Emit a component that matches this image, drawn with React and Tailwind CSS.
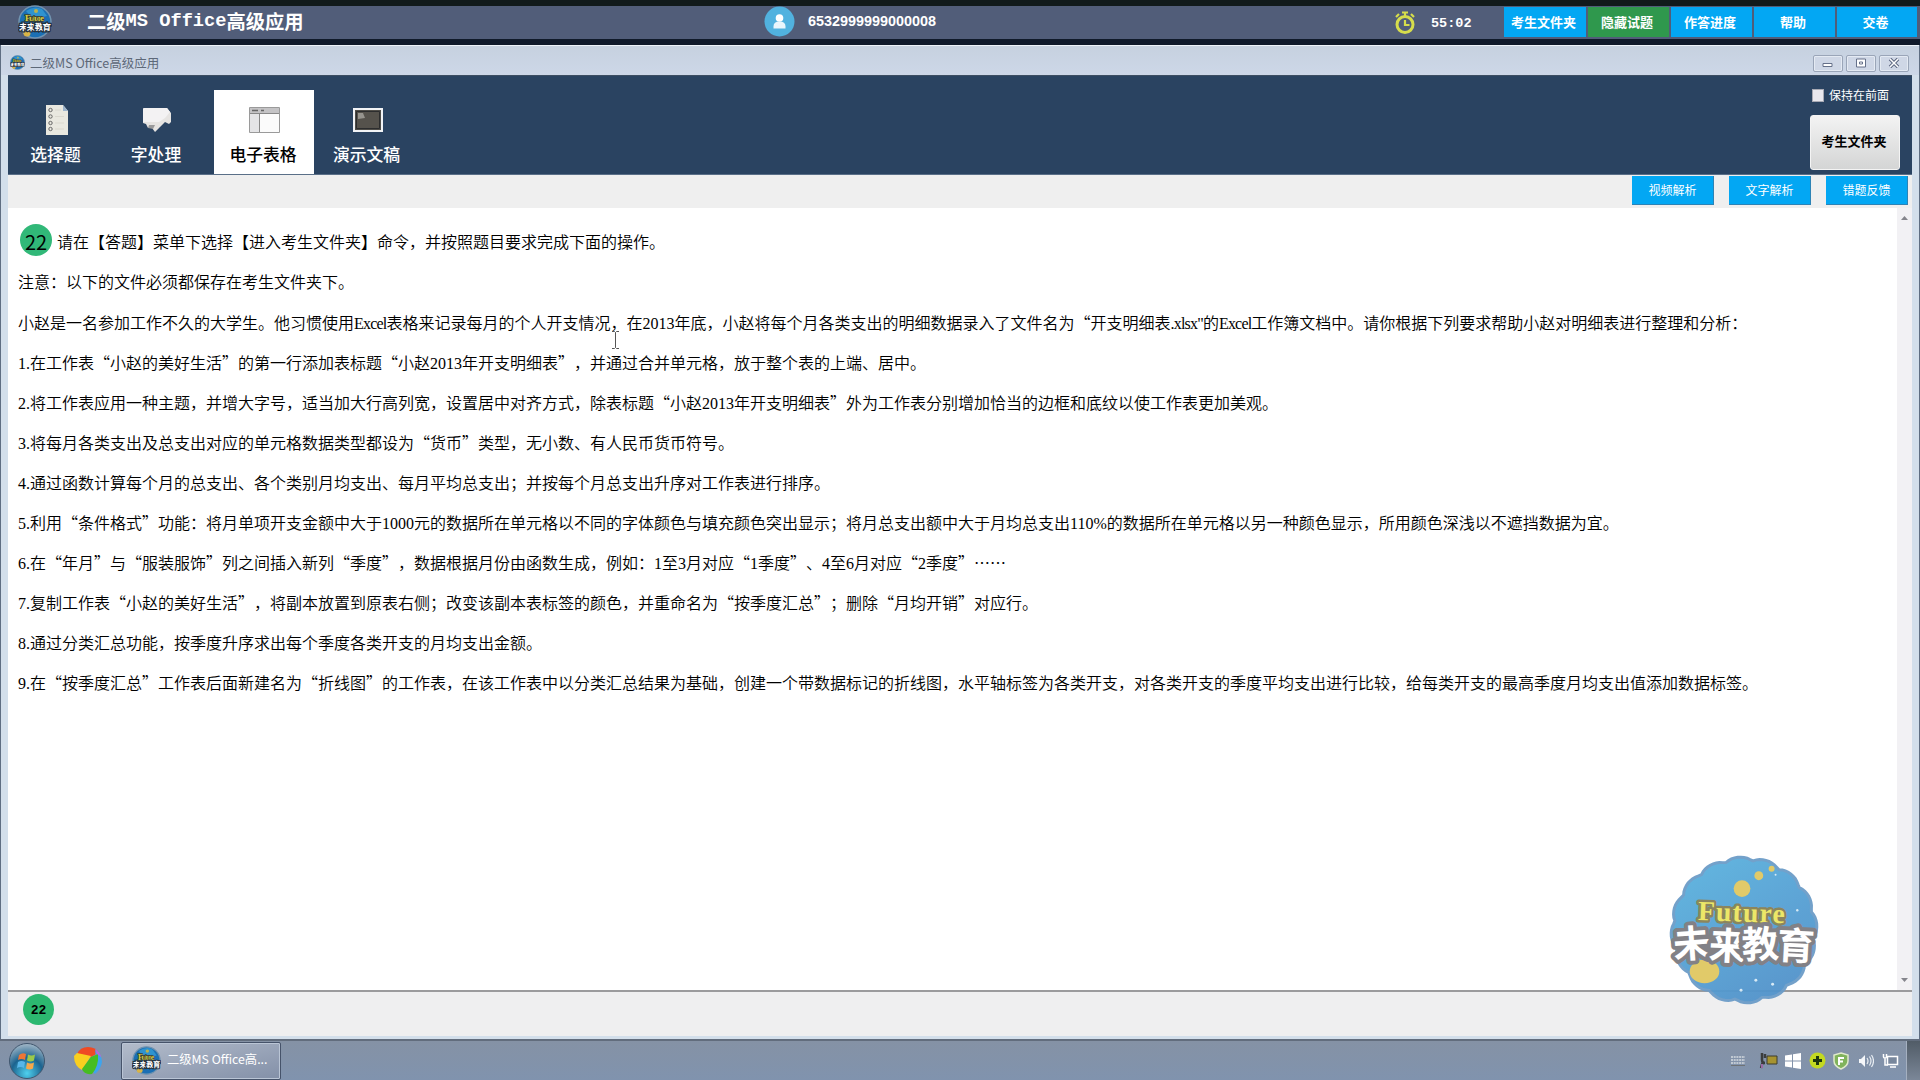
import React from "react";

const CJK = "font-['Noto_Sans_CJK_SC',sans-serif] [text-spacing-trim:space-all]";
const LINES = [
  "注意：以下的文件必须都保存在考生文件夹下。",
  "小赵是一名参加工作不久的大学生。他习惯使用Excel表格来记录每月的个人开支情况，在2013年底，小赵将每个月各类支出的明细数据录入了文件名为“开支明细表.xlsx\"的Excel工作簿文档中。请你根据下列要求帮助小赵对明细表进行整理和分析：",
  "1.在工作表“小赵的美好生活”的第一行添加表标题“小赵2013年开支明细表”，并通过合并单元格，放于整个表的上端、居中。",
  "2.将工作表应用一种主题，并增大字号，适当加大行高列宽，设置居中对齐方式，除表标题“小赵2013年开支明细表”外为工作表分别增加恰当的边框和底纹以使工作表更加美观。",
  "3.将每月各类支出及总支出对应的单元格数据类型都设为“货币”类型，无小数、有人民币货币符号。",
  "4.通过函数计算每个月的总支出、各个类别月均支出、每月平均总支出；并按每个月总支出升序对工作表进行排序。",
  "5.利用“条件格式”功能：将月单项开支金额中大于1000元的数据所在单元格以不同的字体颜色与填充颜色突出显示；将月总支出额中大于月均总支出110%的数据所在单元格以另一种颜色显示，所用颜色深浅以不遮挡数据为宜。",
  "6.在“年月”与“服装服饰”列之间插入新列“季度”，数据根据月份由函数生成，例如：1至3月对应“1季度”、4至6月对应“2季度”……",
  "7.复制工作表“小赵的美好生活”，将副本放置到原表右侧；改变该副本表标签的颜色，并重命名为“按季度汇总”；删除“月均开销”对应行。",
  "8.通过分类汇总功能，按季度升序求出每个季度各类开支的月均支出金额。",
  "9.在“按季度汇总”工作表后面新建名为“折线图”的工作表，在该工作表中以分类汇总结果为基础，创建一个带数据标记的折线图，水平轴标签为各类开支，对各类开支的季度平均支出进行比较，给每类开支的最高季度月均支出值添加数据标签。",
];

// Latin runs use the serif face; everything else, curly quotes included, the Chinese one.
function Mixed({ text }) {
  return text.split(/([\x20-\x7e]+)/).map((part, i) =>
    i % 2 ? (
      <span key={i} className={"font-['Liberation_Serif',serif] font-normal " + (/[a-z]/.test(part) ? "tracking-[-0.8px]" : "")}>{part}</span>
    ) : part
  );
}

function Logo({ size }) {
  const outline = Array.from({ length: 144 }, (_, i) => {
    const a = (i * Math.PI) / 72;
    const r = 70 + 4 * Math.abs(Math.cos(a * 8 + 0.6)) ** 0.7;
    return (75 + r * Math.cos(a)).toFixed(1) + "," + (75 + r * Math.sin(a)).toFixed(1);
  }).join(" ");
  return (
    <svg width={size} height={size} viewBox="0 0 150 150" className="shrink-0 overflow-visible">
      <defs>
        <linearGradient id="sea" x1="0" y1="0" x2="0.6" y2="1">
          <stop offset="0" stopColor="#5bb4e0" />
          <stop offset="1" stopColor="#5293cb" />
        </linearGradient>
      </defs>
      <polygon points={outline} fill="url(#sea)" stroke="#6c9cc8" strokeWidth="3" />
      <g fill="#e0c861">
        <circle cx="73" cy="33" r="8.5" />
        <circle cx="90" cy="20" r="4.5" />
        <circle cx="103" cy="13" r="3" />
        <ellipse cx="35" cy="117" rx="15" ry="12" />
      </g>
      <g fill="#d5e9f5">
        <circle cx="107" cy="19" r="1" /><circle cx="119" cy="92" r="1.5" /><circle cx="87" cy="126" r="1.5" />
        <circle cx="72" cy="136" r="1.5" /><circle cx="104" cy="130" r="1.5" /><circle cx="129" cy="55" r="1.2" />
      </g>
      <g fontFamily="'Liberation Serif', serif" fontWeight="700" fontSize="28" fill="#ece660" stroke="#857f55" strokeWidth="5" paintOrder="stroke" strokeLinejoin="round">
        <text x="28" y="65" textLength="88" transform="rotate(2 28 65)">Future</text>
      </g>
      <g fontFamily="'Noto Sans CJK SC', sans-serif" fontWeight="700" fontSize="38" fill="#fff" stroke="#7c7b80" strokeWidth="8" paintOrder="stroke" strokeLinejoin="round">
        <text x="4" y="104" textLength="142" rotate="-4 3 -2 3">未来教育</text>
      </g>
    </svg>
  );
}

// Globe version of the logo for the title bars and the task button
function MiniLogo({ size }) {
  return (
    <svg width={size} height={size} viewBox="0 0 34 34" className="shrink-0">
      <circle cx="17" cy="17" r="16" fill="#1b6fb4" stroke="#7194b0" strokeWidth="1.5" />
      <path d="M8 6q8-6 16-2l5 7-14 3z" fill="#2f93cf" />
      <circle cx="18" cy="6" r="2" fill="#b9b24f" />
      <circle cx="9" cy="28" r="3.500" fill="#d9b447" />
      <text x="7" y="16" textLength="19" fontFamily="'Liberation Serif', serif" fontWeight="700" fontSize="9" fill="#d9cf45" stroke="#3b4230" strokeWidth="1.500" paintOrder="stroke">Future</text>
      <text x="1" y="25" textLength="32" fontFamily="'Noto Sans CJK SC', sans-serif" fontWeight="700" fontSize="8.500" fill="#fff" stroke="#26323f" strokeWidth="2.500" paintOrder="stroke">未来教育</text>
    </svg>
  );
}

// Icons shown above the four section labels
function SheetIcon() {
  return (
    <svg width="24" height="32" viewBox="0 0 24 32">
      <path d="M1 1h17l5 6v24H1z" fill="#e9e8e0" />
      <path d="M18 1v6h5z" fill="#9db4cc" />
      <g fill="none" stroke="#666" strokeWidth="1">
        <circle cx="5.5" cy="6" r="1.7" /><circle cx="5.5" cy="12.5" r="1.7" /><circle cx="5.5" cy="19" r="1.7" /><circle cx="5.5" cy="25" r="1.7" />
      </g>
      <path d="M10 6h6M10 12.500h9M10 19h9M10 25h9" stroke="#dad8cf" />
    </svg>
  );
}
function BubbleIcon() {
  return (
    <svg width="30" height="26" viewBox="0 0 30 26">
      <path d="M1 2Q1 1 3 1h22l4 5v9l-2 2-4-2-5 5-5 5-3-4H6l-2-4-3-1z" fill="#e6e4e2" />
      <path d="M1 2Q1 1 3 1h22l3 4-5 6-6 4H1z" fill="#f3f2f3" />
      <path d="M7 18h6l-2 4-5-1z" fill="#9a9a9b" />
    </svg>
  );
}
function TableIcon() {
  return (
    <svg width="31" height="26" viewBox="0 0 31 26">
      <path d="M.5.500h30v25H.5z" fill="#fbfbfb" stroke="#9a9a9a" />
      <path d="M1 1h29v5H1z" fill="#c4c3c5" />
      <path d="M1 7h9v18H1z" fill="#e4e4e6" />
      <path d="M10.500 6v19M1 6.500h29" stroke="#888" />
      <path d="M3 3.500h6M12 3.500h3" stroke="#666" strokeWidth="1.500" />
    </svg>
  );
}
function ScreenIcon() {
  return (
    <svg width="30" height="24" viewBox="0 0 30 24">
      <path d="M1 1h28v22H1z" fill="#4f4d48" stroke="#f1f3f6" strokeWidth="2" />
      <path d="M3.500 3.500h23v17h-23z" fill="#55524c" stroke="#2c2d2e" />
      <path d="M5 5h5l2 5-7 1z" fill="#96948e" />
    </svg>
  );
}

const TABS = [
  { label: "选择题", Icon: SheetIcon, cls: "w-[97px] mr-px text-white" },
  { label: "字处理", Icon: BubbleIcon, cls: "w-[102px] mr-[6px] text-white" },
  { label: "电子表格", Icon: TableIcon, cls: "w-[100px] bg-white text-black" },
  { label: "演示文稿", Icon: ScreenIcon, cls: "w-[107px] text-white" },
];

const TOP_BUTTONS = [
  { label: "考生文件夹", cls: "w-[82px] bg-[#03a7f3]" },
  { label: "隐藏试题", cls: "w-[81px] bg-[#2f984d]" },
  { label: "作答进度", cls: "w-[81px] bg-[#03a7f3]" },
  { label: "帮助", cls: "w-[81px] bg-[#03a7f3]" },
  { label: "交卷", cls: "w-[80px] bg-[#03a7f3]" },
];

function TopBar() {
  return (
    <header className="flex h-[45px] shrink-0 items-center border-b-[6px] border-t-[6px] border-b-[#101a2a] border-t-[#111a1b] bg-[#515d79] text-white">
      <div className="ml-[17px] mt-[-1px] flex h-[34px] w-[36px] items-center justify-center"><MiniLogo size={34} /></div>
      <div className="ml-[34px] mt-[-3px] flex h-[30px] w-[645px] items-center whitespace-pre text-[19.3px] font-bold leading-[30px]">
        二级<span className="font-['Liberation_Mono',monospace] text-[18.700px] font-bold">MS Office</span>高级应用
      </div>
      <svg width="31" height="31" viewBox="0 0 31 31" className="mt-[-2px] ml-[32px]">
        <circle cx="15.500" cy="15.500" r="15" fill="#51b2df" />
        <circle cx="15.500" cy="12" r="3.800" fill="#fff" />
        <path d="M9.500 22.500v-2q0-5 6-5t6 5v2z" fill="#eaf6fc" />
      </svg>
      <div className="mt-[-2px] ml-[13px] w-[571px] font-['Liberation_Sans',sans-serif] text-[14.400px] font-bold leading-none">6532999999000008</div>
      <svg width="22" height="24" viewBox="0 0 22 24" className="ml-[15px]">
        <circle cx="11" cy="13.500" r="8" fill="none" stroke="#d6dd4c" strokeWidth="3" />
        <path d="M11 9v5h4.500M8 1.500h6M11 1v4M2 6l3-3M20 6l-3-3" fill="none" stroke="#d6dd4c" strokeWidth="2.200" />
      </svg>
      <div className="ml-[15px] mt-[2px] w-[73px] font-['Liberation_Mono',monospace] text-[13.500px] font-bold leading-none">55:02</div>
      <div className="mt-[-1px] flex gap-[2px]">
        {TOP_BUTTONS.map((b) => (
          <button key={b.label} className={"flex h-[30px] items-center justify-center pr-[3px] text-[13px] font-bold " + b.cls}>{b.label}</button>
        ))}
      </div>
    </header>
  );
}

function TitleBar() {
  const box = "flex h-[17px] w-[30px] items-center justify-center rounded-[2px] border border-[#9aa5b8] bg-[#cfd7e6] shadow-[inset_0_0_0_1px_#e4eaf3]";
  return (
    <div className="flex h-[30px] shrink-0 items-center border-t border-[#eef3f8] bg-linear-to-b from-[#c6d1df] to-[#cdd7e8] pl-[9px] pr-[10px]">
      <div className="mt-[3px] flex items-center"><MiniLogo size={15} /></div>
      <div className="ml-[5px] mt-[5px] text-[12.500px] leading-none text-[#5d6878]">二级MS Office高级应用</div>
      <div className="ml-auto mt-[5px] flex gap-[3px]">
        <div className={box}><svg width="12" height="10" viewBox="0 0 12 10"><path d="M1 5.500h9v3H1z" fill="#fff" stroke="#66718a" /></svg></div>
        <div className={box}><svg width="12" height="10" viewBox="0 0 12 10"><path d="M1.500 1h9v8h-9z" fill="#fff" stroke="#66718a" /><path d="M4.500 4h3v2h-3z" fill="none" stroke="#66718a" /></svg></div>
        <div className={box}><svg width="12" height="10" viewBox="0 0 12 10"><path d="M2 1l8 8M10 1L2 9" stroke="#5c6781" strokeWidth="3.500" /><path d="M2 1l8 8M10 1L2 9" stroke="#fff" strokeWidth="1.500" /></svg></div>
      </div>
    </div>
  );
}

function Ribbon() {
  return (
    <div className="flex h-[100px] shrink-0 items-end border-b border-t border-b-[#5a6f88] border-t-[#3d4e63] bg-[#2a4361]">
      {TABS.map(({ label, Icon, cls }) => (
        <div key={label} className={"flex h-[84px] flex-col items-center " + cls}>
          <div className="mt-[13px] flex h-[34px] items-center justify-center"><Icon /></div>
          <div className="mr-[2px] mt-[7px] whitespace-nowrap text-[16.800px] font-medium leading-[20px]">{label}</div>
        </div>
      ))}
      <div className="ml-auto mr-[12px] flex w-[90px] flex-col self-start">
        <label className="mt-[12px] flex h-[15px] items-center text-[12px] leading-none text-white">
          <span className="ml-[2px] mr-[5px] h-[13px] w-[12px] border border-[#a8aab4] bg-[#e9e8ee]" />
          <span className="mt-[-2px]">保持在前面</span>
        </label>
        <button className="mt-[12px] h-[55px] rounded-[3px] border border-[#f4f4f4] bg-linear-to-b from-[#f3f3f3] to-[#d4d5d5] pb-[3px] pr-[2px] text-[13px] font-bold text-black">考生文件夹</button>
      </div>
    </div>
  );
}

function Taskbar() {
  return (
    <footer className="flex h-[41px] shrink-0 items-center border-t-2 border-[#626d7d] bg-linear-to-b from-[#8592a5] to-[#8093ae]">
      <svg width="38" height="38" viewBox="0 0 38 38" className="ml-[8px]">
        <defs><radialGradient id="orb" cx=".5" cy=".85" r=".9"><stop offset="0" stopColor="#4fd0ee" /><stop offset=".5" stopColor="#1b638f" /><stop offset="1" stopColor="#b6c3cf" /></radialGradient></defs>
        <circle cx="19" cy="19" r="17.500" fill="url(#orb)" stroke="#40566e" />
        <path d="M11 13q3.500-3 7-1l-1 6q-3.500-2-7 0z" fill="#ee7635" /><path d="M20 12.500q3.500 2 7 0l-1 6q-3.500 2-7 0z" fill="#9bc94a" />
        <path d="M10 20q3.500-2 7 0l-1 6q-3.500-2-7 0z" fill="#58b6e8" /><path d="M19 20.500q3.500 2 7 0l-1 6q-3.500 2-7 0z" fill="#f6a84a" />
      </svg>
      <svg width="30" height="30" viewBox="0 0 30 30" className="ml-[27px]">
        <path d="M4 8Q7 1 15 1t10 6l-9 5z" fill="#ef4a24" /><path d="M22 4q7 4 7 12-1 7-7 12l-4-5 5-12z" fill="#3ea4ed" />
        <path d="M1 10l3-3 14 3-9 14Q1 20 1 10z" fill="#f9cf1f" /><path d="M9 23L18 11l7-3q1 12-6 20-8 1-10-5z" fill="#46bd22" /><path d="M22 3q5 3 6 8l-4-3z" fill="#bb65dc" />
      </svg>
      <div className="ml-[18px] flex h-[38px] w-[160px] items-center rounded-[2px] border border-[#46536a] bg-linear-to-br from-[#b3bccb] to-[#8390a8] pl-[10px] shadow-[inset_0_0_0_1px_#bac5d5]">
        <MiniLogo size={29} />
        <span className="mb-[2px] ml-[6px] whitespace-nowrap text-[12.300px] leading-none text-white">二级MS Office高...</span>
      </div>
      <div className="ml-auto flex h-full items-center">
        <svg width="14" height="10" viewBox="0 0 14 10" className="mr-[14px]"><path d="M0 1h14M0 4h14M0 7h14" stroke="#d6dbe0" strokeWidth="1.500" strokeDasharray="2 .7" /><path d="M0 9.500h14" stroke="#6f7376" /></svg>
        <svg width="19" height="17" viewBox="0 0 19 17" className="mr-[7px]"><path d="M3 1v7q0 3 3 3M6 2v4M4 9L2 16" fill="none" stroke="#3b3d3d" strokeWidth="2.500" /><path d="M8 4h10v8H8z" fill="#a69330" stroke="#3d3d2f" /><path d="M3 12v4" stroke="#9b6aa5" strokeWidth="2" /></svg>
        <svg width="16" height="16" viewBox="0 0 16 16" className="mr-[8px]"><path d="M0 2.500l7-1v6H0zM8 1.300L16 0v7.500H8zM0 8.500h7v6l-7-1zM8 8.500h8V16l-8-1.300z" fill="#fff" /></svg>
        <svg width="17" height="17" viewBox="0 0 17 17" className="mr-[7px]"><circle cx="8.500" cy="8.500" r="8" fill="#c3d921" /><path d="M8.500 4v9M4 8.500h9" stroke="#1c350d" strokeWidth="3" /></svg>
        <svg width="16" height="18" viewBox="0 0 16 18" className="mr-[9px]"><path d="M8 1l7 2v6q0 5-7 8-7-3-7-8V3z" fill="#80b35c" stroke="#dfe9cc" strokeWidth="1.500" /><path d="M6 13V6h5M6 9.500h4" fill="none" stroke="#fff" strokeWidth="2" /></svg>
        <svg width="16" height="14" viewBox="0 0 16 14" className="mr-[8px]"><path d="M1 5h2l4-4v12L3 9H1z" fill="#f5f7fa" /><path d="M9 4q2 3 0 6M11.500 2.500q3 4.500 0 9M13.500 1q4 6 0 12" fill="none" stroke="#e9eef3" strokeWidth="1.200" /></svg>
        <svg width="17" height="15" viewBox="0 0 17 15" className="mr-[7px]"><path d="M5.500 3.500h10v8h-10z" fill="#78879c" stroke="#fff" strokeWidth="1.500" /><path d="M8 14h6M1.500 1v3q0 1 1.500 1t1.500-1V1M3 5v7h3" fill="none" stroke="#fff" strokeWidth="1.500" /></svg>
        <div className="h-full w-[14px] border-l border-[#a5b0c0] bg-linear-to-b from-[#515c67] to-[#7b8798]" />
      </div>
    </footer>
  );
}

export default function App() {
  return (
    <div lang="zh-CN" className={"relative flex h-[1080px] w-[1920px] flex-col overflow-hidden bg-[#d3dfeb] " + CJK}>
      <TopBar />
      <main className="flex min-h-0 flex-1 flex-col border-l border-r border-[#5f6e82]">
        <TitleBar />
        <div className="mx-[7px] mb-[3px] flex min-h-0 flex-1 flex-col bg-white">
          <Ribbon />
          <div className="flex h-[33px] shrink-0 items-start justify-end gap-[15px] bg-[#efefef] pr-[4px] pt-px">
            {["视频解析", "文字解析", "错题反馈"].map((t) => (
              <button key={t} className="h-[29px] w-[82px] border-b border-r border-[#2d83b5] bg-[#03a7f3] text-[12px] text-white">{t}</button>
            ))}
          </div>
          <div className="flex min-h-0 flex-1">
            <article className="flex-1 pl-[10px] pt-[13px] text-[16px] font-[350] leading-[40px] text-black">
              <div className="flex h-[40px] items-center">
                <span className="mb-[3px] ml-[2px] mr-[5px] flex h-[32px] w-[32px] items-center justify-center rounded-full bg-[#31b878] pt-[5px] text-[20px] font-normal leading-none">22</span>
                <p className="whitespace-nowrap">请在【答题】菜单下选择【进入考生文件夹】命令，并按照题目要求完成下面的操作。</p>
              </div>
              {LINES.map((l, i) => (
                <p key={l} className={"h-[40px] whitespace-nowrap " + (i === 1 ? "mt-px" : "")}><Mixed text={l} /></p>
              ))}
            </article>
            <div className="flex w-[15px] flex-col items-center justify-between bg-[#f2f1f4] py-[8px]">
              <svg width="7" height="4" viewBox="0 0 7 4"><path d="M0 4l3.500-4L7 4z" fill="#85858c" /></svg>
              <svg width="7" height="4" viewBox="0 0 7 4"><path d="M0 0h7L3.500 4z" fill="#85858c" /></svg>
            </div>
          </div>
          <div className="flex h-[46px] shrink-0 border-t-2 border-[#9b9b9d] bg-[#efeff0] pl-[15px]">
            <span className="mt-[2px] flex h-[31px] w-[31px] items-center justify-center rounded-full bg-[#2cb870] pt-[3px] font-['Liberation_Mono',monospace] text-[13px] font-bold text-black">22</span>
          </div>
        </div>
      </main>
      <Taskbar />
      <div className="absolute left-[1670px] top-[856px] opacity-95"><Logo size={148} /></div>
      <svg width="9" height="18" viewBox="0 0 9 18" className="absolute left-[611px] top-[331px]"><path d="M1 .500h2.500l1 1 1-1H8M4.500 1.500v15M1 17.500h2.500l1-1 1 1H8" fill="none" stroke="#555" /></svg>
    </div>
  );
}
